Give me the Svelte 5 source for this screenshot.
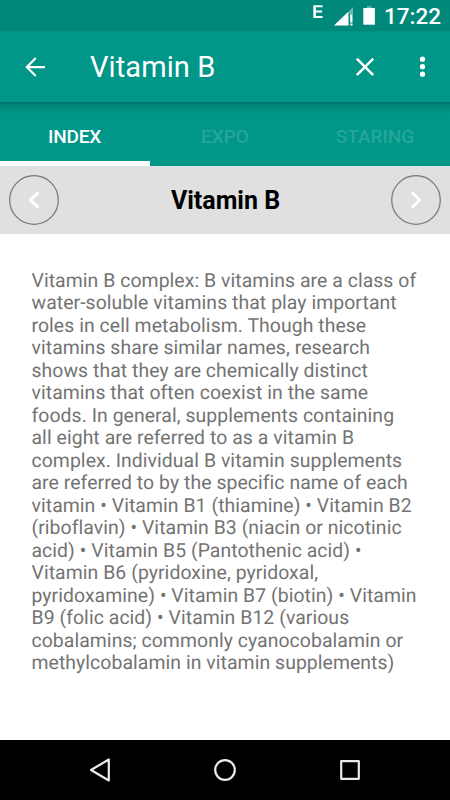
<script>
  const tabs = ['INDEX', 'EXPO', 'STARING'];
  const lines = [
    'Vitamin B complex: B vitamins are a class of',
    'water-soluble vitamins that play important',
    'roles in cell metabolism. Though these',
    'vitamins share similar names, research',
    'shows that they are chemically distinct',
    'vitamins that often coexist in the same',
    'foods. In general, supplements containing',
    'all eight are referred to as a vitamin B',
    'complex. Individual B vitamin supplements',
    'are referred to by the specific name of each',
    'vitamin • Vitamin B1 (thiamine) • Vitamin B2',
    '(riboflavin) • Vitamin B3 (niacin or nicotinic',
    'acid) • Vitamin B5 (Pantothenic acid) •',
    'Vitamin B6 (pyridoxine, pyridoxal,',
    'pyridoxamine) • Vitamin B7 (biotin) • Vitamin',
    'B9 (folic acid) • Vitamin B12 (various',
    'cobalamins; commonly cyanocobalamin or',
    'methylcobalamin in vitamin supplements)'
  ];
</script>

<div class="screen">
  <div class="status">
    <svg width="80" height="31" viewBox="0 0 80 31" fill="#fff" aria-hidden="true">
      <path d="M13.300 5.200h9.200v2h-6.600v3.200h6.200v2h-6.200v3.500h6.600v2h-9.200z" />
      <path d="M53 7v7.500h-4v-3.500z" opacity=".4" />
      <path d="M48.500 11.500v14H34z" />
      <path d="M50.200 14.500h2.300v8h-2.300zM50.200 23.500h2.300v2h-2.300z" />
      <path d="M67 6.200h4.500v2H67z" opacity=".4" />
      <path d="M63.300 8h11.600v16.700H63.300z" />
    </svg>
    <span class="clock">17:22</span>
  </div>

  <header class="toolbar">
    <svg class="back" width="30" height="30" viewBox="0 0 24 24" fill="#fff" aria-hidden="true">
      <path d="M20 11.100H7.600l5.600-5.700L12 4.200 4.200 12l7.800 7.800 1.200-1.200-5.600-5.700H20z" />
    </svg>
    <h1>Vitamin B</h1>
    <svg class="close" width="30" height="30" viewBox="0 0 30 30" fill="none" stroke="#fff" stroke-width="2.500" stroke-linecap="round" aria-hidden="true">
      <path d="M7.500 7.300l15 15M22.500 7.300l-15 15" />
    </svg>
    <svg class="more" width="30" height="30" viewBox="0 0 30 30" fill="#fff" aria-hidden="true">
      <circle cx="14.500" cy="7.200" r="2.600" /><circle cx="14.500" cy="14.700" r="2.600" /><circle cx="14.500" cy="22.200" r="2.600" />
    </svg>
  </header>

  <nav class="tabs">
    {#each tabs as tab, i}
      <div class="tab" class:active={i === 0}>{tab}</div>
    {/each}
  </nav>

  <div class="pager">
    <div class="round">
      <svg width="50" height="50" viewBox="0 0 50 50" fill="none" aria-hidden="true">
        <circle cx="25" cy="25" r="24.300" stroke="#757575" stroke-width="1.200" />
        <path d="M29.300 17.300L21.500 25l7.800 7.700" stroke="#fff" stroke-width="2.800" />
      </svg>
    </div>
    <h2>Vitamin B</h2>
    <div class="round">
      <svg width="50" height="50" viewBox="0 0 50 50" fill="none" aria-hidden="true">
        <circle cx="25" cy="25" r="24.300" stroke="#757575" stroke-width="1.200" />
        <path d="M20.800 17.300l7.800 7.700-7.800 7.700" stroke="#fff" stroke-width="2.800" />
      </svg>
    </div>
  </div>

  <main>
    <p>
      {#each lines as line}
        <span class="line">{line}</span>
      {/each}
    </p>
  </main>

  <footer class="navbar">
    <svg width="30" height="30" viewBox="0 0 30 30" fill="none" stroke="#ebebeb" stroke-width="2.200" stroke-linejoin="round" aria-hidden="true">
      <path d="M23.800 4.500v21L6 15z" />
    </svg>
    <svg width="30" height="30" viewBox="0 0 30 30" fill="none" stroke="#ebebeb" stroke-width="2.200" aria-hidden="true">
      <circle cx="15" cy="15" r="9.800" />
    </svg>
    <svg width="30" height="30" viewBox="0 0 30 30" fill="none" stroke="#ebebeb" stroke-width="2.200" stroke-linejoin="round" aria-hidden="true">
      <path d="M6.200 6.200h17.600v17.600H6.200z" />
    </svg>
  </footer>
</div>

<style>
  :global(body) { margin: 0; }
  .screen {
    width: 450px;
    height: 800px;
    display: flex;
    flex-direction: column;
    overflow: hidden;
    background: #fff;
    font-family: Roboto, "Noto Sans", sans-serif;
  }
  .status {
    height: 32px;
    flex: none;
    box-sizing: border-box;
    padding-right: 10px;
    display: flex;
    justify-content: flex-end;
    background: linear-gradient(#00897b 31px, #009282 31px);
  }
  .clock {
    margin-left: 4px;
    width: 56px;
    line-height: 33px;
    font-size: 22.500px;
    font-weight: 500;
    color: #fff;
    white-space: nowrap;
    text-align: right;
  }
  .toolbar {
    height: 70px;
    flex: none;
    box-sizing: border-box;
    padding: 0 12px 0 20px;
    display: flex;
    align-items: center;
    background: #009688;
  }
  h1 {
    flex: 1;
    margin: 0 0 0 40px;
    font-size: 29px;
    line-height: 70px;
    font-weight: 400;
    letter-spacing: .1px;
    color: #fff;
  }
  .more { margin-left: 28px; }
  .tabs {
    height: 64px;
    flex: none;
    display: flex;
    background: linear-gradient(rgba(0, 0, 0, .24), rgba(0, 0, 0, .1) 4px, rgba(0, 0, 0, 0) 12px), #009688;
  }
  .tab {
    width: 150px;
    box-sizing: border-box;
    border-bottom: 5px solid transparent;
    line-height: 70px;
    height: 64px;
    text-align: center;
    font-size: 19px;
    font-weight: 500;
    color: #26a69a;
  }
  .tab.active {
    color: #fff;
    border-color: #fff;
    letter-spacing: -.2px;
    padding-right: 1px;
  }
  .pager {
    height: 68px;
    flex: none;
    box-sizing: border-box;
    padding: 0 9px;
    display: flex;
    align-items: center;
    justify-content: space-between;
    background: #e0e0e0;
  }
  .round, .round svg { display: block; width: 50px; height: 50px; }
  h2 {
    margin: 1px 0 0 1px;
    font-size: 25px;
    font-weight: 700;
    color: #000;
  }
  main {
    flex: 1;
    padding: 35.500px 0 0 31.500px;
  }
  p {
    margin: 0;
    font-size: 19.400px;
    line-height: 22.500px;
    color: #737373;
    letter-spacing: .065px;
    text-rendering: geometricPrecision;
  }
  .line { display: block; white-space: nowrap; }
  .navbar {
    height: 60px;
    flex: none;
    box-sizing: border-box;
    padding: 0 85px;
    display: flex;
    align-items: center;
    justify-content: space-between;
    background: #000;
  }
</style>
